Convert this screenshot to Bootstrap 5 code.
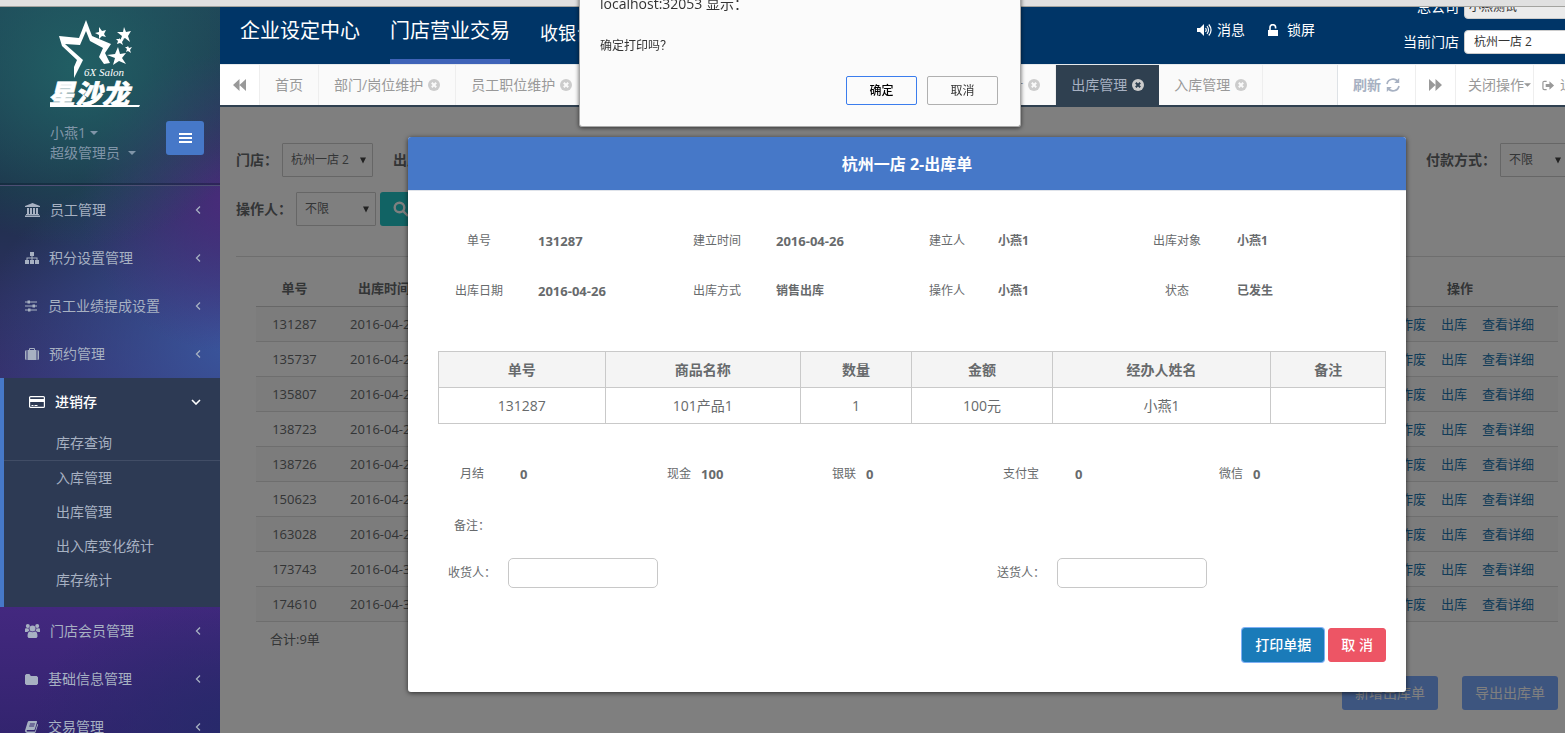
<!DOCTYPE html>
<html lang="zh-CN">
<head>
<meta charset="utf-8">
<meta name="viewport" content="width=device-width, initial-scale=1">
<title>出库管理</title>
<link href="https://cdn.jsdelivr.net/npm/bootstrap@5.3.0/dist/css/bootstrap.min.css" rel="stylesheet">
<style>
  body { font-family: "Open Sans", "Noto Sans CJK SC", sans-serif; font-size: 14px; line-height: 20px; color: #676a6c; overflow: hidden; }
  a { text-decoration: none; }
  svg { display: block; flex: none; }
  .shell { width: calc(100% + 29px); height: 100vh; overflow: hidden; }
  .strip { height: 7px; background: #e0e0e0; border-bottom: 1px solid #a3a39f; }

  /* sidebar */
  .side { width: 220px; flex: none; overflow: hidden; background:
    radial-gradient(ellipse 190px 180px at 80px 60px, #215f64 0, rgba(33,95,100,0) 100%),
    radial-gradient(ellipse 150px 150px at 230px 195px, rgba(75,42,124,.95) 0, rgba(75,42,124,0) 100%),
    radial-gradient(ellipse 260px 200px at 235px 340px, rgba(58,87,159,.95) 0, rgba(58,87,159,0) 100%),
    radial-gradient(ellipse 200px 140px at 230px 720px, rgba(38,42,106,.9) 0, rgba(38,42,106,0) 100%),
    linear-gradient(180deg, #1f4356 0, #1d3049 180px, #2c3060 290px, #352f6b 370px, #43287f 600px, #32246e 733px); }
  .side-head { height: 179px; padding: 12px 16px 0 50px; border-bottom: 1px solid #4d4f74; box-shadow: inset 0 -2px 0 rgba(10,20,40,.35); }
  .side-head .who { color: #8095a8; }
  .menu-btn { width: 38px; height: 34px; background: #4678c8; border-radius: 3px; padding: 0 12px; color: #fff; }
  .side-link { height: 48px; padding: 0 19px 0 25px; gap: 10px; color: #a7b1c2; }
  .side-open { background: #2d3a54; border-left: 4px solid #4678c8; padding-bottom: 10px; }
  .side-open > .side-link { color: #fff; font-weight: 500; }
  .sub-link { display: block; height: 34px; line-height: 34px; padding-left: 52px; color: #a7b1c2; }
  .sub-first { height: 35px; border-bottom: 1px solid #414d66; }

  /* header */
  .topbar { height: 57px; background: #003567; overflow: hidden; color: #fff; }
  .topbar a { color: #fff; }
  .mainnav a { font-size: 20px; line-height: 48px; height: 57px; }
  .mainnav a.on { border-bottom: 5px solid #3f63b8; }
  .mainnav a.sm-item { font-size: 18px; line-height: 52px; }
  .shop-row { height: 24px; gap: 5px; }
  .shop-row select { height: 24px; width: 130px; font-size: 12px; line-height: 16px; border: 1px solid #ccc; border-radius: 4px; background: #fff; color: #333; padding: 0 9px; appearance: none; }
  .shop-row select:disabled { background: #ebebeb; opacity: 1; padding: 0 4px; }

  /* tabs */
  .tabs { height: 43px; background: #fafafa; border-top: 1px solid #e7eaec; border-bottom: 2px solid #2f4050; }
  .tabs a { height: 40px; display: flex; align-items: center; gap: 5px; padding: 0 15px; color: #999; border-right: 1px solid #eee; white-space: nowrap; flex: none; }
  .tabs .tool { background: #fff; }
  .tabs a.on { background: #2f4050; color: #a7b1c2; border-right: 0; }
  .tab-gap { width: 392px; flex: none; }

  /* page */
  .page { background: #fff; }
  .filters { padding: 36px 26px 0 16px; }
  .filters label { font-weight: 700; }
  .pick { height: 34px; font-size: 12px; color: #676a6c; border: 1px solid #ccc; border-radius: 1px; padding: 0 8px; appearance: none;
    background: #fff url("data:image/svg+xml,%3Csvg xmlns='http://www.w3.org/2000/svg' viewBox='0 0 7 7'%3E%3Cpath d='M0 0h7L3.5 7z' fill='%23444'/%3E%3C/svg%3E") no-repeat right 6px center / 6px 7px; }
  .rule { border-top: 1px solid #dcdcdc; margin: 30px 0 0 16px; }
  .list-wrap { padding: 14px 36px 0 36px; font-size: 13px; }
  .list-tbl { width: 100%; table-layout: fixed; }
  .list-tbl th { height: 35px; text-align: center; border-bottom: 1px solid #cfcfcf; }
  .list-tbl td { height: 35px; text-align: center; border-bottom: 1px solid #dcdcdc; }
  .list-tbl tr:nth-child(odd) td { background: #f8f8f8; }
  .list-tbl td.ops { text-align: right; padding-right: 24px; white-space: nowrap; }
  .ops a { color: #2277b0; margin-left: 15px; }
  .soft-btn { width: 96px; height: 34px; padding: 0; font-size: 14px; background: #7aaaff; color: #fff; border: 0; border-radius: 3px; }
  .shade { background: rgba(0,0,0,.5); }

  /* order sheet */
  .sheet { top: 30px; left: 0; right: 0; margin: 0 auto; max-width: 998px; background: #fff; border-radius: 3px; overflow: hidden; box-shadow: 0 1px 5px rgba(0,0,0,.65); font-size: 12px; }
  .sheet-head { height: 54px; background: #4678c8; color: #fff; font-size: 16px; font-weight: 700; border-bottom: 1px solid #dfe3ea; margin: 0; padding-top: 2px; }
  .sheet-body { padding: 25px 20px 30px 30px; }
  .info { display: grid; grid-template-columns: 82fr 156fr 82fr 156fr 66fr 155fr 84fr 167fr; grid-auto-rows: 50px; align-items: center; margin: 0 0 35px; }
  .info dt { font-weight: 400; text-align: center; }
  .info dd { margin: 0; padding-left: 18px; font-weight: 700; }
  .num { font-size: 13px; font-weight: 700; }
  .goods { width: 100%; table-layout: fixed; font-size: 14px; text-align: center; }
  .goods th, .goods td { height: 36px; border: 1px solid #c9c9c9; }
  .goods th { background: #f4f4f4; }
  .pays { display: grid; grid-template-columns: 207fr 165fr 171fr 216fr 167fr; padding-left: 22px; margin-top: 40px; height: 20px; }
  .pays > div { display: flex; gap: 10px; }
  .pays > .wide { gap: 36px; }
  .people { display: grid; grid-template-columns: 549fr 389fr; padding-left: 10px; margin-top: 22px; }
  .people input { width: 150px; height: 30px; border: 1px solid #c8c8c8; border-radius: 5px; }
  .act { height: 34px; padding: 0 12px; font-size: 14px; color: #fff; border: 1px solid #ed5565; background: #ed5565; border-radius: 3px; font-weight: 500; }
  .act-main { background: #1a7bb9; border-color: #1a7bb9; box-shadow: 0 0 0 1px #7fb0f5; }

  /* browser prompt */
  .prompt-layer { top: 0; left: 0; width: calc(100% + 35px); z-index: 20; }
  .prompt { width: 442px; margin: -6px auto 0; padding: 0 22px 21px 20px; background: #fbfbfb; border: 1px solid #aaa; border-top: 0; border-radius: 0 0 3px 3px; box-shadow: 0 1px 4px rgba(0,0,0,.6); color: #333; }
  .prompt p { font-size: 12px; margin: 22px 0 20px; }
  .prompt button { width: 71px; height: 29px; font-size: 12px; background: #fbfbfb; border: 1px solid #b0b0b0; border-radius: 2px; color: #333; }
  .prompt button.ok { border-color: #3b7ded; color: #000; font-weight: 500; }
</style>
</head>
<body>
<svg width="0" height="0" class="position-absolute" aria-hidden="true">
  <symbol id="i-x" viewBox="0 0 12 12"><circle cx="6" cy="6" r="6" fill="#ccc"/><path d="M3.8 3.8l4.4 4.4M8.2 3.8L3.8 8.2" stroke="var(--xc,#fafafa)" stroke-width="2"/></symbol>
  <symbol id="i-left" viewBox="0 0 6 10"><path d="M5 1.500L1.500 5 5 8.500" fill="none" stroke="currentColor" stroke-width="1.300"/></symbol>
  <symbol id="i-caret" viewBox="0 0 8 4"><path d="M0 0h8L4 4z" fill="currentColor"/></symbol>
</svg>

<div class="shell d-flex flex-column">
  <div class="strip flex-shrink-0"></div>
  <div class="d-flex flex-grow-1">
    <aside class="side">
      <div class="side-head">
        <svg width="92" height="92" viewBox="0 0 92 92" fill="#fff" role="img" aria-label="星沙龙">
          <path fill-rule="evenodd" d="M36 1L42 17 61 25 55 34 60 44 54 45 49 38 53 29 40 22 36 12 30 26 15 25 33 41 24 59 24 48 27 41 12 27 9 17 29 19z"/>
          <path d="M49 8l3 4 4-1-2 4 2 3-4-1-3 3v-4l-4-2 4-1zM74 8l2 5 5-1-3 5 2 6-5-4-5 3 2-5-5-4 6 0zM69 19l2 2 3-1-2 3 1 3-3-2-3 1 1-3-2-2 3 0zM78 27l1 2 3-1-2 3 1 3-3-2-2 1 1-3-2-2 2 0zM68 28l2 7 6-1-4 5 4 6-7-3-6 4 2-7-8-3 8-1z"/>
          <text x="34" y="57" font-family="Liberation Serif, serif" font-style="italic" font-size="11">6X Salon</text>
          <text x="-2" y="85" font-family="Noto Sans CJK SC, sans-serif" font-style="italic" font-weight="900" font-size="27" stroke="#fff" stroke-width=".6">星沙龙</text>
          <path d="M0 86h90l-1 2H0z"/>
        </svg>
        <div class="d-flex justify-content-between align-items-end who">
          <div class="pt-2 mt-1">
            <div class="d-flex align-items-center">小燕1<svg width="8" height="4" class="ms-1"><use href="#i-caret"/></svg></div>
            <div class="d-flex align-items-center">超级管理员<svg width="8" height="4" class="ms-2"><use href="#i-caret"/></svg></div>
          </div>
          <button class="btn menu-btn mb-2" aria-label="菜单"><svg width="13" height="12" viewBox="0 0 13 12" stroke="#fff" stroke-width="2"><path d="M0 2h13M0 6h13M0 10h13"/></svg></button>
        </div>
      </div>
      <nav>
        <a href="#" class="side-link d-flex align-items-center"><svg width="15" height="14" viewBox="0 0 15 14" fill="currentColor"><path d="M7.500 0L15 3v1H0V3zM2 5h2v6h1V5h2v6h1V5h2v6h1V5h2v6h1v1H1v-1h1zM0 12.500h15V14H0z"/></svg><span class="me-auto">员工管理</span><svg width="6" height="10"><use href="#i-left"/></svg></a>
        <a href="#" class="side-link d-flex align-items-center"><svg width="14" height="12" viewBox="0 0 14 12" fill="currentColor"><path d="M5 0h4v4H7.500v1.500H12.500V8H14v4h-4V8h1.500V6.500h-4V8H9v4H5V8h1.500V6.500h-4V8H4v4H0V8h1.500V5.500h5V4H5z"/></svg><span class="me-auto">积分设置管理</span><svg width="6" height="10"><use href="#i-left"/></svg></a>
        <a href="#" class="side-link d-flex align-items-center"><svg width="13" height="12" viewBox="0 0 13 12" fill="currentColor"><path d="M0 1.500h12v1H0zM0 5.500h12v1H0zM0 9.500h12v1H0zM2.500 .5H5v3H2.500zM7.500 4.500H10v3H7.500zM3 8.500h2.500v3H3z"/></svg><span class="me-auto">员工业绩提成设置</span><svg width="6" height="10"><use href="#i-left"/></svg></a>
        <a href="#" class="side-link d-flex align-items-center"><svg width="14" height="12" viewBox="0 0 14 12" fill="currentColor"><path d="M1.500 2v10A1.500 1.500 0 0 1 0 10.500v-7A1.500 1.500 0 0 1 1.500 2zM12.500 2v10a1.500 1.500 0 0 0 1.500-1.500v-7A1.500 1.500 0 0 0 12.500 2zM2.500 2H4V.8L4.800 0h4.400l.8.800V2h1.500v10h-9zM5 2h4V1H5z"/></svg><span class="me-auto">预约管理</span><svg width="6" height="10"><use href="#i-left"/></svg></a>
        <div class="side-open">
          <a href="#" class="side-link d-flex align-items-center"><svg width="16" height="12" viewBox="0 0 16 12" fill="none" stroke="currentColor"><rect x=".6" y=".6" width="14.800" height="10.800" rx="1" stroke-width="1.200"/><path d="M1 4.500h14" stroke-width="3"/><path d="M2.500 9.500h2M5.500 9.500h3"/></svg><span class="me-auto">进销存</span><svg width="10" height="6" viewBox="0 0 10 6"><path d="M1 1l4 4 4-4" fill="none" stroke="currentColor" stroke-width="1.600"/></svg></a>
          <a href="#" class="sub-link sub-first">库存查询</a>
          <a href="#" class="sub-link">入库管理</a>
          <a href="#" class="sub-link">出库管理</a>
          <a href="#" class="sub-link">出入库变化统计</a>
          <a href="#" class="sub-link">库存统计</a>
        </div>
        <a href="#" class="side-link d-flex align-items-center"><svg width="15" height="14" viewBox="0 0 15 14" fill="currentColor"><circle cx="2.800" cy="2" r="2"/><circle cx="12.200" cy="2" r="2"/><circle cx="7.500" cy="4.500" r="3"/><path d="M0 8V5.500Q0 4 1.200 4.200l2.500.3Q3.600 6 4.600 7 3 7 2.300 8zM15 8V5.500Q15 4 13.800 4.200l-2.500.3Q11.400 6 10.400 7 12 7 12.700 8zM2.500 12.500Q2.500 7.500 5 7.500q2.500 1.300 5 0 2.500 0 2.500 5L11.500 14h-8z"/></svg><span class="me-auto">门店会员管理</span><svg width="6" height="10"><use href="#i-left"/></svg></a>
        <a href="#" class="side-link d-flex align-items-center"><svg width="13" height="11" viewBox="0 0 13 11" fill="currentColor"><path d="M0 1.300L1.300 0h3L5.500 1.300V2h6.200L13 3.300v6.400L11.700 11H1.300L0 9.700z"/></svg><span class="me-auto">基础信息管理</span><svg width="6" height="10"><use href="#i-left"/></svg></a>
        <a href="#" class="side-link d-flex align-items-center"><svg width="13" height="12" viewBox="0 0 13 12" fill="currentColor"><path fill-rule="evenodd" d="M4 0h7.500q.8.200.5 1L9.800 8.500 9 9H2q-1 .8 0 1.500h8L12.300 3q1 .3.600 1.200L10.600 11q-.3 1-1.300 1H2Q-.5 11.200.2 9L2.600 1.200Q3 0 4 0zM5 2.500l-.3 1h5l.3-1zM4.400 4.600l-.3 1h5l.3-1z"/></svg><span class="me-auto">交易管理</span><svg width="6" height="10"><use href="#i-left"/></svg></a>
      </nav>
    </aside>

    <div class="flex-grow-1 d-flex flex-column" style="min-width:0">
      <header class="topbar d-flex flex-shrink-0">
        <nav class="mainnav d-flex ps-3 ms-1 me-auto" style="gap:30px">
          <a href="#">企业设定中心</a>
          <a href="#" class="on">门店营业交易</a>
          <a href="#" class="sm-item">收银台</a>
        </nav>
        <div class="d-flex" style="height:46px;gap:23px;margin-right:88px">
          <a href="#" class="d-flex h-100 align-items-center" style="gap:5px"><svg width="15" height="12" viewBox="0 0 15 12"><path d="M0 4h3l4-4v12L3 8H0z" fill="#fff"/><path d="M8.500 4q1.500 2 0 4M10 2q3 4 0 8M11.800.5q4.500 5.500 0 11" fill="none" stroke="#fff" stroke-width="1.200"/></svg>消息</a>
          <a href="#" class="d-flex gap-2 h-100 align-items-center"><svg width="11" height="12" viewBox="0 0 11 12"><path d="M0 6h10v6H0z" fill="#fff"/><path d="M2 6V3.500a2.800 2.800 0 0 1 5.600 0V4.500" fill="none" stroke="#fff" stroke-width="1.600"/></svg>锁屏</a>
        </div>
        <div class="d-flex flex-column justify-content-end align-items-end" style="padding-bottom:10px;gap:11px">
          <div class="shop-row d-flex align-items-center flex-shrink-0"><label for="corp">总公司</label><select id="corp" disabled><option>小燕测试</option></select></div>
          <div class="shop-row d-flex align-items-center flex-shrink-0"><label for="shop">当前门店</label><select id="shop"><option>杭州一店 2</option></select></div>
        </div>
      </header>

      <nav class="tabs d-flex flex-shrink-0">
        <a href="#" class="tool" style="padding:0 13px" aria-label="向前"><svg width="13" height="12" viewBox="0 0 13 12" fill="#999"><path d="M6.500 0v12L0 6zM13 0v12L6.500 6z"/></svg></a>
        <a href="#">首页</a>
        <a href="#">部门/岗位维护<svg width="12" height="12"><use href="#i-x"/></svg></a>
        <a href="#">员工职位维护<svg width="12" height="12"><use href="#i-x"/></svg></a>
        <span class="tab-gap"></span>
        <a href="#">统计<svg width="12" height="12"><use href="#i-x"/></svg></a>
        <a href="#" class="on" style="--xc:#2f4050">出库管理<svg width="12" height="12"><use href="#i-x"/></svg></a>
        <a href="#">入库管理<svg width="12" height="12"><use href="#i-x"/></svg></a>
        <div class="d-flex ms-auto border-start">
          <a href="#" class="tool fw-bold" style="color:#a7b1c2">刷新<svg width="14" height="14" viewBox="0 0 14 14" fill="none" stroke="currentColor" stroke-width="1.700"><path d="M1 6A6 6 0 0 1 12 4M13 8A6 6 0 0 1 2 10"/><path d="M13.200 0v5h-5zM.8 14V9h5z" fill="currentColor" stroke="none"/></svg></a>
          <a href="#" class="tool" style="padding:0 13px" aria-label="向后"><svg width="13" height="12" viewBox="0 0 13 12" fill="#999"><path d="M0 0v12l6.500-6zM6.500 0v12L13 6z"/></svg></a>
          <a href="#" class="tool gap-0" style="padding:0 2px 0 12px">关闭操作<svg width="7" height="4"><use href="#i-caret"/></svg></a>
          <a href="#" class="tool" style="padding:0 5px 0 8px"><svg width="13" height="11" viewBox="0 0 14 11"><path d="M5 1H2.500Q1 1 1 2.500v6Q1 10 2.500 10H5" fill="none" stroke="#999" stroke-width="1.300"/><path d="M4 4h4V1l5 4.500L8 10V7H4z" fill="#999"/></svg>退出</a>
        </div>
      </nav>

      <main class="page flex-grow-1 position-relative">
        <form class="filters d-flex flex-column" style="gap:15px">
          <div class="d-flex align-items-center">
            <label for="f1" class="me-1">门店：</label><select id="f1" class="pick" style="width:91px"><option>杭州一店 2</option></select>
            <label class="ms-3 ps-1 me-auto">出库时间：</label>
            <label for="f2" class="me-1">付款方式：</label><select id="f2" class="pick" style="width:68px"><option>不限</option></select>
          </div>
          <div class="d-flex align-items-center gap-1">
            <label for="f3">操作人：</label><select id="f3" class="pick" style="width:80px"><option>不限</option></select>
            <button type="button" class="btn d-flex align-items-center" style="height:34px;background:#23c6c8;border-radius:3px" aria-label="搜索"><svg width="16" height="16" viewBox="0 0 16 16" fill="none" stroke="#fff" stroke-width="2.400"><circle cx="6.500" cy="6.500" r="4.800"/><path d="M10 10l5 5"/></svg></button>
          </div>
        </form>
        <div class="rule"></div>
        <div class="list-wrap">
          <table class="list-tbl">
            <colgroup><col style="width:77px"><col style="width:102px"><col><col style="width:196px"></colgroup>
            <thead><tr><th>单号</th><th>出库时间</th><th></th><th>操作</th></tr></thead>
            <tbody>
              <tr><td>131287</td><td>2016-04-26</td><td></td><td class="ops"><a href="#">作废</a><a href="#">出库</a><a href="#">查看详细</a></td></tr>
              <tr><td>135737</td><td>2016-04-26</td><td></td><td class="ops"><a href="#">作废</a><a href="#">出库</a><a href="#">查看详细</a></td></tr>
              <tr><td>135807</td><td>2016-04-26</td><td></td><td class="ops"><a href="#">作废</a><a href="#">出库</a><a href="#">查看详细</a></td></tr>
              <tr><td>138723</td><td>2016-04-27</td><td></td><td class="ops"><a href="#">作废</a><a href="#">出库</a><a href="#">查看详细</a></td></tr>
              <tr><td>138726</td><td>2016-04-27</td><td></td><td class="ops"><a href="#">作废</a><a href="#">出库</a><a href="#">查看详细</a></td></tr>
              <tr><td>150623</td><td>2016-04-28</td><td></td><td class="ops"><a href="#">作废</a><a href="#">出库</a><a href="#">查看详细</a></td></tr>
              <tr><td>163028</td><td>2016-04-29</td><td></td><td class="ops"><a href="#">作废</a><a href="#">出库</a><a href="#">查看详细</a></td></tr>
              <tr><td>173743</td><td>2016-04-30</td><td></td><td class="ops"><a href="#">作废</a><a href="#">出库</a><a href="#">查看详细</a></td></tr>
              <tr><td>174610</td><td>2016-04-30</td><td></td><td class="ops"><a href="#">作废</a><a href="#">出库</a><a href="#">查看详细</a></td></tr>
            </tbody>
          </table>
          <div style="padding:7px 14px 27px">合计:9单</div>
          <div class="d-flex justify-content-end gap-4">
            <button type="button" class="btn soft-btn">新增出库单</button>
            <button type="button" class="btn soft-btn">导出出库单</button>
          </div>
        </div>
        <div class="shade position-absolute top-0 start-0 w-100 h-100"></div>

        <section class="sheet position-absolute" role="dialog" aria-labelledby="sheetTitle">
          <h1 class="sheet-head d-flex align-items-center justify-content-center" id="sheetTitle">杭州一店 2-出库单</h1>
          <div class="sheet-body">
            <dl class="info">
              <dt>单号</dt><dd class="num">131287</dd><dt>建立时间</dt><dd class="num">2016-04-26</dd><dt>建立人</dt><dd>小燕1</dd><dt>出库对象</dt><dd>小燕1</dd>
              <dt>出库日期</dt><dd class="num">2016-04-26</dd><dt>出库方式</dt><dd>销售出库</dd><dt>操作人</dt><dd>小燕1</dd><dt>状态</dt><dd>已发生</dd>
            </dl>
            <table class="goods">
              <colgroup><col style="width:17.6%"><col style="width:20.6%"><col style="width:11.8%"><col style="width:14.8%"><col style="width:23.1%"><col></colgroup>
              <thead><tr><th>单号</th><th>商品名称</th><th>数量</th><th>金额</th><th>经办人姓名</th><th>备注</th></tr></thead>
              <tbody><tr><td>131287</td><td>101产品1</td><td>1</td><td>100元</td><td>小燕1</td><td></td></tr></tbody>
            </table>
            <div class="pays">
              <div class="wide"><span>月结</span><span class="num">0</span></div>
              <div><span>现金</span><span class="num">100</span></div>
              <div><span>银联</span><span class="num">0</span></div>
              <div class="wide"><span>支付宝</span><span class="num">0</span></div>
              <div><span>微信</span><span class="num">0</span></div>
            </div>
            <div class="ps-3" style="margin-top:32px">备注：</div>
            <div class="people">
              <div class="d-flex align-items-center gap-2"><label for="rcv" class="me-1">收货人：</label><input id="rcv" type="text"></div>
              <div class="d-flex align-items-center gap-2"><label for="snd" class="me-1">送货人：</label><input id="snd" type="text"></div>
            </div>
            <div class="d-flex justify-content-end gap-1" style="margin-top:40px">
              <button type="button" class="act act-main">打印单据</button>
              <button type="button" class="act">取 消</button>
            </div>
          </div>
        </section>
      </main>
    </div>
  </div>
</div>

<div class="prompt-layer position-fixed">
  <div class="prompt" role="alertdialog" aria-labelledby="pt">
    <div id="pt">localhost:32053 显示：</div>
    <p>确定打印吗？</p>
    <div class="d-flex justify-content-end" style="gap:10px">
      <button type="button" class="ok">确定</button>
      <button type="button">取消</button>
    </div>
  </div>
</div>
<script src="https://cdn.jsdelivr.net/npm/bootstrap@5.3.0/dist/js/bootstrap.bundle.min.js"></script>
</body>
</html>
